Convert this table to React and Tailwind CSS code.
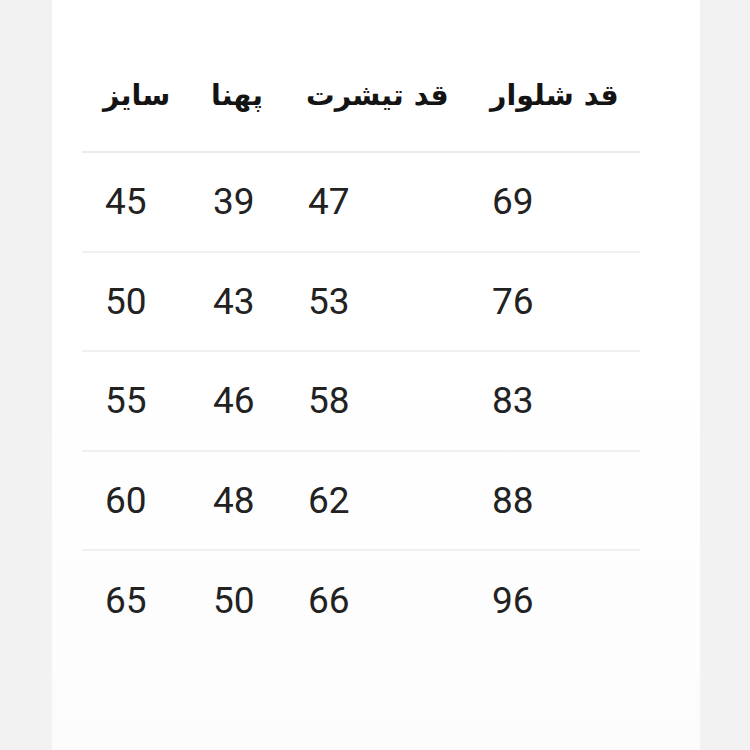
import React from "react";

const headers = ["سایز", "پهنا", "قد تیشرت", "قد شلوار"];

const rows = [
  ["45", "39", "47", "69"],
  ["50", "43", "53", "76"],
  ["55", "46", "58", "83"],
  ["60", "48", "62", "88"],
  ["65", "50", "66", "96"],
];

export default function App() {
  return (
    <div className="flex w-[750px] h-[750px] bg-[#f2f2f2]">
      <div className="ml-[52px] w-[648px] h-full bg-white bg-gradient-to-b from-white via-white to-[#fcfcfc]">
        <div className="ml-[30px] w-[558px] pt-[53px]">
          {/* Header */}
          <div
            className="grid grid-cols-[108px_95px_184px_1fr] pl-[21px] h-[100px] items-center border-b-2 border-[#eaeaf0] text-[#141414] text-[28.5px] font-bold pb-[12px]"
            style={{ fontFamily: '"DejaVu Sans", "Noto Sans", sans-serif' }}
          >
            {headers.map((h) => (
              <div key={h} className="text-left leading-none">
                <span dir="rtl">{h}</span>
              </div>
            ))}
          </div>

          {/* Rows */}
          {rows.map((row, i) => (
            <div
              key={i}
              className={`grid grid-cols-[108px_95px_184px_1fr] pl-[23px] h-[99.5px] items-center text-[#222] text-[37px] font-['Roboto',sans-serif] ${
                i < rows.length - 1 ? "border-b-2 border-[#efeff4]" : ""
              }`}
            >
              {row.map((v, j) => (
                <div key={j} className="leading-none">
                  {v}
                </div>
              ))}
            </div>
          ))}
        </div>
      </div>
    </div>
  );
}
